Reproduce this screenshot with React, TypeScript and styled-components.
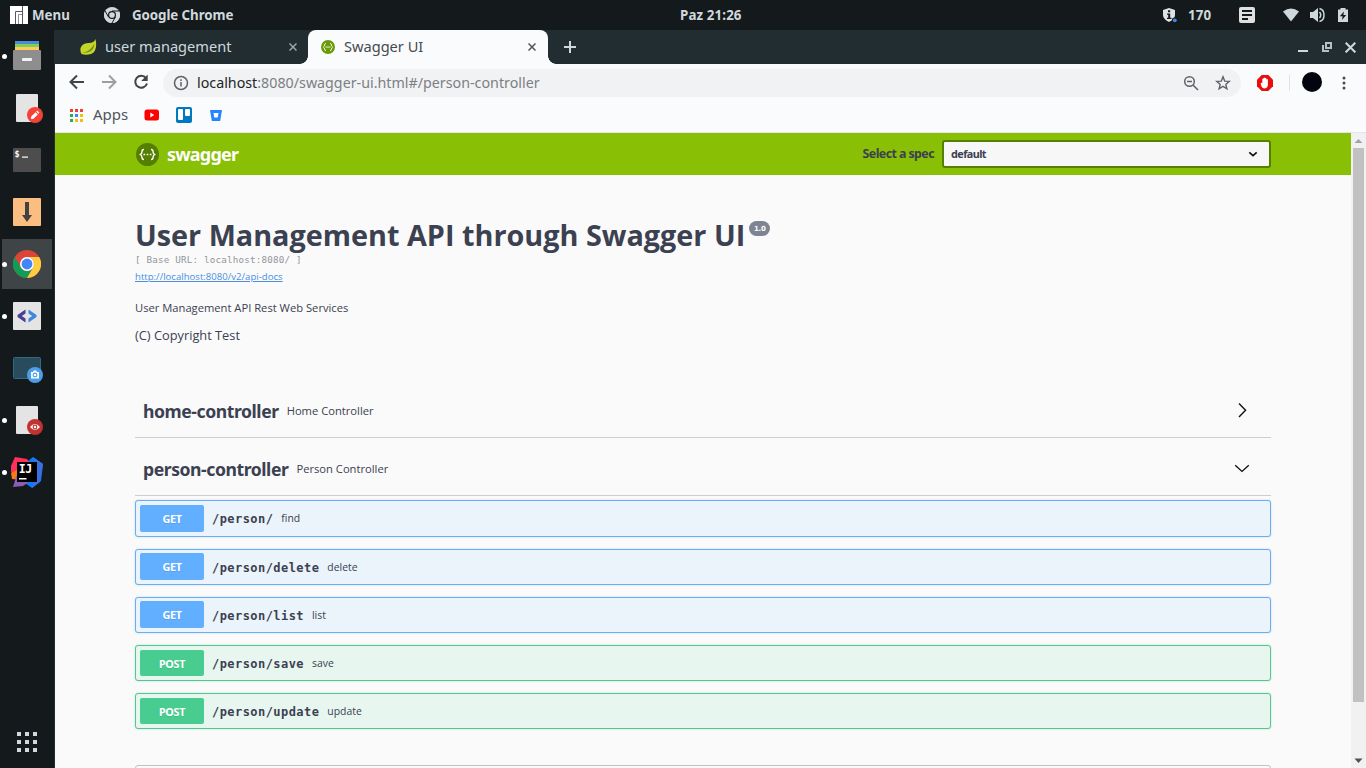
import React from "react";
import styled, { createGlobalStyle, css } from "styled-components";

const ui = '"Noto Sans", "Open Sans", sans-serif';
const body = '"Open Sans", sans-serif';
const heading = '"Noto Sans", "Open Sans", sans-serif';
const mono = '"DejaVu Sans Mono", monospace';

const GlobalStyle = createGlobalStyle`
  html, body { margin: 0; padding: 0; overflow: hidden; }
  * { box-sizing: border-box; }
  svg { display: block; flex: none; }
`;

const Desktop = styled.div`
  width: 1366px;
  height: 768px;
  display: flex;
  flex-direction: column;
  overflow: hidden;
  background: #14191c;
  white-space: nowrap;
`;

/* ---------- system panel ---------- */

const Panel = styled.header`
  height: 30px;
  flex: none;
  display: grid;
  grid-template-columns: 680px 1fr auto;
  align-items: center;
  color: #cfd8dc;
  font: 700 13.33px/30px ${ui};
`;

const PanelGroup = styled.div`
  display: flex;
  align-items: center;
`;

const PanelText = styled.span<{ $left?: number; $width?: number; $track?: number }>`
  margin-left: ${(p) => p.$left ?? 0}px;
  width: ${(p) => (p.$width ? `${p.$width}px` : "auto")};
  letter-spacing: ${(p) => p.$track ?? 0}px;
`;

const Slot = styled.span<{ $left?: number; $right?: number }>`
  display: flex;
  flex: none;
  margin-left: ${(p) => p.$left ?? 0}px;
  margin-right: ${(p) => p.$right ?? 0}px;
`;

/* ---------- dock ---------- */

const Main = styled.div`
  flex: 1;
  min-height: 0;
  display: flex;
`;

const Dock = styled.nav`
  width: 55px;
  flex: none;
  display: flex;
  flex-direction: column;
  border-right: 1px solid #252d31;
  background: #14191c;
`;

const DockItem = styled.div<{ $active?: boolean }>`
  position: relative;
  width: 50px;
  height: 50px;
  margin: 1px 2px;
  flex: none;
  display: flex;
  align-items: center;
  justify-content: center;
  background: ${(p) => (p.$active ? "#3f4447" : "transparent")};
`;

const RunningDot = styled.i`
  position: absolute;
  left: 0;
  top: 23px;
  width: 5px;
  height: 5px;
  border-radius: 50%;
  background: #fff;
`;

const AppGrid = styled.div`
  margin: auto 0 16px 17px;
  display: grid;
  grid-template-columns: repeat(3, 4px);
  grid-auto-rows: 4px;
  gap: 4px;
  i { background: #cfd8dc; }
`;

/* ---------- browser ---------- */

const Browser = styled.div`
  flex: 1;
  min-width: 0;
  display: flex;
  flex-direction: column;
  background: #fafbfd;
`;

const TabStrip = styled.div`
  height: 34px;
  flex: none;
  display: flex;
  align-items: center;
  padding-right: 10px;
  background: #222d32;
  color: #cfd8dc;
`;

const Tab = styled.div<{ $active?: boolean }>`
  position: relative;
  height: 34px;
  display: flex;
  align-items: center;
  font: 14.6px/32px ${ui};
  ${(p) =>
    p.$active
      ? css`
          width: 240px;
          padding: 0 12px;
          border-radius: 8px 8px 0 0;
          background: #fafbfd;
          color: #454b50;
          &::before, &::after {
            content: "";
            position: absolute;
            bottom: 0;
            width: 8px;
            height: 8px;
          }
          &::before { left: -8px; background: radial-gradient(circle at 0 0, transparent 7.5px, #fafbfd 8px); }
          &::after { right: -8px; background: radial-gradient(circle at 100% 0, transparent 7.5px, #fafbfd 8px); }
        `
      : css`
          width: 253px;
          padding: 0 11px 0 25px;
        `}
`;

const TabTitle = styled.span`
  flex: 1;
  margin: -2px 0 0 8px;
`;

const WindowButtons = styled.div`
  margin-left: auto;
  display: flex;
  align-items: center;
  gap: 12px;
`;

const Toolbar = styled.div`
  height: 37px;
  flex: none;
  display: flex;
  align-items: center;
  padding-left: 13px;
`;

const NavButtons = styled.div`
  display: flex;
  gap: 14px;
  margin: -1px 13px 0 0;
`;

const AddressBar = styled.div`
  width: 1078px;
  height: 28px;
  display: flex;
  align-items: center;
  padding: 0 10px;
  border-radius: 14px;
  background: #f1f2f4;
  color: #7b7f83;
  font: 14.28px/28px ${ui};
  b { font-weight: 400; color: #202428; }
`;

const Url = styled.span`
  flex: 1;
  height: 28px;
  margin-left: 8px;
`;

const Divider = styled.i`
  width: 1px;
  height: 16px;
  margin-left: 16px;
  background: #dfe2e6;
`;

const Avatar = styled.i`
  width: 20px;
  height: 20px;
  margin: -2px 0 0 12px;
  border-radius: 50%;
  background: #02040f;
`;

const Bookmarks = styled.div`
  height: 32px;
  flex: none;
  display: flex;
  align-items: center;
  padding: 0 0 3px 14px;
  border-bottom: 1px solid #e3e5f3;
  color: #50555a;
  font: 15px/28px ${ui};
`;

const FolderLabel = styled.span`
  height: 28px;
  line-height: 26px;
`;

/* ---------- page ---------- */

const Viewport = styled.div`
  flex: 1;
  min-height: 0;
  display: flex;
`;

const Page = styled.main`
  flex: 1;
  overflow: hidden;
  background: #fafafa;
  color: #3b4151;
`;

const Scrollbar = styled.div`
  width: 15px;
  flex: none;
  display: flex;
  flex-direction: column;
  align-items: center;
  background: #f1f1f1;
`;

const ScrollThumb = styled.i`
  width: 11px;
  height: 554px;
  margin-bottom: auto;
  background: #c1c1c1;
`;

const SpecBar = styled.div`
  height: 42px;
  display: flex;
  align-items: center;
  padding: 0 80px 0 81px;
  background: #89bf04;
`;

const Brand = styled.span`
  flex: 1;
  margin-left: 8px;
  color: #fff;
  font: 700 18px/42px ${heading};
  letter-spacing: -0.8px;
`;

const SpecLabel = styled.label`
  margin-right: 8px;
  font: 700 12.4px/42px ${heading};
  letter-spacing: -0.57px;
`;

const SpecSelect = styled.div`
  width: 329px;
  height: 28px;
  display: flex;
  align-items: center;
  justify-content: space-between;
  padding: 0 11px 0 7px;
  border: 2px solid #547f00;
  border-radius: 3px;
  background: #f7f7f7;
  font: 700 10.8px/24px ${heading};
  letter-spacing: -0.55px;
`;

const Content = styled.div`
  padding: 0 80px;
`;

const Info = styled.section`
  padding-top: 40px;
  height: 205px;
`;

const Title = styled.h2`
  display: flex;
  margin: 0;
  font: 700 28.8px/40px ${body};
`;

const Version = styled.small`
  width: 21px;
  height: 15px;
  margin: 6px 0 0 4px;
  border-radius: 12px;
  background: #7d8492;
  color: #fff;
  text-align: center;
  font: 700 7px/17px "DejaVu Sans", sans-serif;
  letter-spacing: -0.3px;
`;

const BaseUrl = styled.pre`
  margin: -3px 0 0;
  color: #92959d;
  font: 9.2px/16px ${mono};
  letter-spacing: 0.22px;
`;

const DocsLink = styled.a`
  display: block;
  margin-top: 1px;
  color: #4990e2;
  font: 9.6px/16px ${body};
  text-decoration: underline;
`;

const Description = styled.p`
  margin: 15px 0 0;
  font: 11.2px/16px ${body};
`;

const Terms = styled.p`
  margin: 9px 0 0;
  font: 12.8px/20px ${body};
`;

const TagHeader = styled.h4`
  height: 58px;
  margin: 0;
  padding: 4px 20px 0 8px;
  display: flex;
  align-items: center;
  border-bottom: 1px solid #cdced1;
`;

const TagName = styled.span`
  font: 700 17.6px/24px ${heading};
  letter-spacing: -0.44px;
`;

const TagNote = styled.small`
  flex: 1;
  margin-left: 8px;
  font: 11.2px/24px ${body};
`;

const Operations = styled.div`
  display: flex;
  flex-direction: column;
  gap: 12px;
  padding-top: 4px;
`;

const tones = {
  GET: { line: "#61affe", fill: "#ebf3fb" },
  POST: { line: "#49cc90", fill: "#e8f6f0" },
};

const Operation = styled.div<{ $method: keyof typeof tones; $tall?: boolean }>`
  height: ${(p) => (p.$tall ? 37 : 36)}px;
  display: flex;
  align-items: center;
  padding: 0 4px;
  border: 1px solid ${(p) => tones[p.$method].line};
  border-radius: 3px;
  background: ${(p) => tones[p.$method].fill};
  box-shadow: 0 0 2px rgba(0, 0, 0, 0.19);
`;

const Method = styled.span<{ $method: keyof typeof tones; $tall?: boolean }>`
  width: 64px;
  height: ${(p) => (p.$method === "GET" ? 27 : 26)}px;
  margin-top: ${(p) => (p.$method === "GET" && !p.$tall ? -1 : 0)}px;
  border-radius: 2px;
  background: ${(p) => tones[p.$method].line};
  color: #fff;
  font: 700 10.8px/27px ${heading};
  letter-spacing: -0.35px;
  text-align: center;
  text-shadow: 0 1px 0 rgba(0, 0, 0, 0.1);
`;

const Path = styled.span<{ $tall?: boolean }>`
  margin: ${(p) => (p.$tall ? 0 : 1)}px 0 0 8px;
  font: 700 12px/24px ${mono};
  letter-spacing: 0.44px;
`;

const Summary = styled.span`
  margin: -1px 0 0 8px;
  font: 10.4px/24px ${body};
`;

const Models = styled.section`
  height: 50px;
  margin-top: 36px;
  border: 1px solid #bfc0c4;
  border-radius: 3px;
`;

/* ---------- drawings ---------- */

const ChromeMark = ({ size, mono: flat }: { size: number; mono?: boolean }) => {
  const bg = flat ? "#14191c" : "#fff";
  const c = flat ? ["#cfd8dc", "#cfd8dc", "#cfd8dc"] : ["#db4437", "#0f9d58", "#ffcd40"];
  return (
    <svg width={size} height={size} viewBox="0 0 48 48">
      <circle cx="24" cy="24" r="24" fill={c[0]} />
      <path d="M3.2 12 A24 24 0 0 0 24 48 L34.4 30 A12 12 0 0 1 13.6 30z" fill={c[1]} />
      <path d="M24 48 A24 24 0 0 0 44.8 12 H24 A12 12 0 0 1 34.4 30z" fill={c[2]} />
      {flat && <path d="M24 12H45M34.4 30L24 48M13.6 30L3.2 12" stroke={bg} strokeWidth="3" fill="none" />}
      <circle cx="24" cy="24" r="12" fill={bg} />
      <circle cx="24" cy="24" r={flat ? 8.5 : 9.3} fill={flat ? c[0] : "#4285f4"} />
    </svg>
  );
};

const Close = ({ color, size = 8, weight = 1.5 }: { color: string; size?: number; weight?: number }) => (
  <svg width={size} height={size} viewBox="0 0 8 8">
    <path d="M.5.5l7 7M7.5.5l-7 7" stroke={color} strokeWidth={weight} />
  </svg>
);

const Chevron = ({ open }: { open?: boolean }) => (
  <svg width="18" height="18" viewBox="0 0 18 18" fill="none" stroke="#111" strokeWidth="1.4">
    {open ? <path d="M2.2 5.2L9 11.4l6.8-6.2" /> : <path d="M6 1.4l6.6 6.8L6 15" />}
  </svg>
);

const FilesIcon = () => (
  <svg width="32" height="32">
    <path fill="#4a8bd8" d="M4 1h24v3H4z" />
    <path fill="#7ed058" d="M4 4h24v3H4z" />
    <path fill="#ffcb5a" d="M4 7h24v3H4z" />
    <rect x="2" y="10" width="28" height="20" rx="1" fill="#8e8e8e" />
    <rect x="11" y="18" width="10" height="3" rx="1" fill="#f3f3f3" />
  </svg>
);

const EditorIcon = () => (
  <svg width="32" height="32">
    <rect x="5" y="2" width="22" height="28" rx="1" fill="#e4e4e4" />
    <circle cx="24" cy="23" r="8" fill="#f44336" />
    <path d="M20 27v-2.2l4.6-4.6 2.2 2.2-4.6 4.6zM25.2 19.6l1-1 2.2 2.2-1 1z" fill="#fff" />
  </svg>
);

const TerminalIcon = () => (
  <svg width="32" height="32">
    <rect x="2" y="4" width="28" height="24" rx="1" fill="#4d4d4d" />
    <text x="3.6" y="13" fill="#fff" fontFamily="DejaVu Sans Mono" fontWeight="700" fontSize="8.5">$</text>
    <path d="M11 12.5h6v1.2h-6z" fill="#fff" />
  </svg>
);

const DownloadIcon = () => (
  <svg width="32" height="32">
    <rect x="2" y="2" width="28" height="28" rx="1" fill="#fbbd80" />
    <path d="M14 6h4v13h3l-5 7-5-7h3z" fill="#424242" />
  </svg>
);

const CodeIcon = () => (
  <svg width="32" height="32">
    <rect x="2" y="2" width="28" height="28" rx="1" fill="#e4e4e4" />
    <path d="M14.500 9.500v4L10.800 16l3.700 2.500v4L6.500 17v-2z" fill="#4a3f93" />
    <path d="M17.500 9.500v4l3.700 2.500-3.700 2.500v4l8-5.500v-2z" fill="#3f87dc" />
  </svg>
);

const ScreenshotIcon = () => (
  <svg width="32" height="32">
    <rect x="2.5" y="5.5" width="27" height="21" rx="1" fill="#294b5e" stroke="#376782" />
    <circle cx="24" cy="23" r="8" fill="#4a9fe8" />
    <path d="M20 20h2l.8-1.4h2.4L26 20h2v6.5h-8z" fill="#fff" />
    <circle cx="24" cy="23" r="1.9" fill="none" stroke="#4a9fe8" strokeWidth="1.1" />
  </svg>
);

const ViewerIcon = () => (
  <svg width="32" height="32">
    <rect x="5" y="2" width="22" height="28" rx="1" fill="#e4e4e4" />
    <circle cx="24" cy="23" r="8" fill="#c23330" />
    <path d="M19 23q5-6 10 0q-5 6-10 0z" fill="#fff" />
    <circle cx="24" cy="23" r="1.8" fill="none" stroke="#c23330" strokeWidth="1.2" />
  </svg>
);

const IdeaIcon = () => (
  <svg width="32" height="32">
    <path d="M17 5l5-4 10 7-2 17-9 7-10-7z" fill="#087cfa" />
    <path d="M22 1l10 7-3 18-8 6 4-20z" fill="#3b6fe0" />
    <path d="M0 10l4-9 12 2 6 8-14 12-8-7z" fill="#fe315d" />
    <path d="M0 17l6-3 3 10-8-1z" fill="#f97a12" />
    <path d="M6 18l12 8-6 4-10 1z" fill="#8b5db5" />
    <path d="M6 6h20v20H6z" fill="#000" />
    <text x="7.8" y="16.8" fill="#fff" fontFamily="DejaVu Sans Mono" fontWeight="700" fontSize="11.5" letterSpacing="-.5">IJ</text>
    <path d="M8 22h7.500v1.500H8z" fill="#fff" />
  </svg>
);

const dock = [
  { icon: <FilesIcon />, running: true },
  { icon: <EditorIcon /> },
  { icon: <TerminalIcon /> },
  { icon: <DownloadIcon /> },
  { icon: <ChromeMark size={28} />, running: true, active: true },
  { icon: <CodeIcon />, running: true },
  { icon: <ScreenshotIcon /> },
  { icon: <ViewerIcon />, running: true },
  { icon: <IdeaIcon />, running: true },
];

const operations: { method: keyof typeof tones; path: string; note: string }[] = [
  { method: "GET", path: "/person/", note: "find" },
  { method: "GET", path: "/person/delete", note: "delete" },
  { method: "GET", path: "/person/list", note: "list" },
  { method: "POST", path: "/person/save", note: "save" },
  { method: "POST", path: "/person/update", note: "update" },
];

const appColors = ["#ea4335", "#ea4335", "#ea4335", "#34a853", "#4285f4", "#fbbc05", "#34a853", "#fbbc05", "#fbbc05"];

const SystemPanel = () => (
  <Panel>
    <PanelGroup>
      <Slot $left={10}>
        <svg width="18" height="18">
          <path fill="#fff" d="M0 0h18v18H0z" />
          <path d="M5.500 18V5.500H12.500M12.500 0v18" stroke="#53595c" fill="none" />
          <path d="M8.500 18V8.500H12" stroke="#8c9194" fill="none" />
        </svg>
      </Slot>
      <PanelText $left={4} $width={72}>Menu</PanelText>
      <ChromeMark size={16} mono />
      <PanelText $left={12} $track={-0.08}>Google Chrome</PanelText>
    </PanelGroup>
    <PanelText $track={0.12}>Paz 21:26</PanelText>
    <PanelGroup>
      <svg width="16" height="16">
        <path d="M8 1l6 2v5q0 4-6 7-6-3-6-7V3z" fill="#dfe1e2" />
        <path d="M7 3.300h2.200v2H7zM6 6.500h3.200v4.300H10.500V12H6v-1.200h1.200V7.700H6z" fill="#14191c" />
        <circle cx="13.600" cy="13.300" r="2.700" fill="#14191c" />
        <circle cx="13.800" cy="13.300" r="1.900" fill="#3f8ae0" />
      </svg>
      <PanelText $left={11} $width={51} $track={0.1}>170</PanelText>
      <svg width="16" height="16">
        <rect width="16" height="16" rx="2" fill="#e0e0e0" />
        <path d="M3 4h10M3 8h10M3 12h6" stroke="#14191c" strokeWidth="2" />
      </svg>
      <Slot $left={28}>
        <svg width="16" height="14">
          <path d="M0 3.500Q8-2.500 16 3.500L8 13.500z" fill="#cfd8dc" />
        </svg>
      </Slot>
      <Slot $left={11}>
        <svg width="15" height="16" fill="none" stroke="#cfd8dc" strokeWidth="1.500">
          <path d="M0 5h3l5-4v14l-5-4H0z" fill="#cfd8dc" stroke="none" />
          <path d="M9.500 5q2.500 3 0 6M9.500 1.500q4.500 1 4.500 6.500t-4.500 6.500" />
        </svg>
      </Slot>
      <Slot $left={13} $right={18}>
        <svg width="10" height="14">
          <path d="M2.500 0h5v1.500H10V14H0V1.500h2.500z" fill="#cfd8dc" />
          <path d="M6 3.500L1.800 8.300H4.600L4 12l4.200-5H5.400z" fill="#14191c" />
        </svg>
      </Slot>
    </PanelGroup>
  </Panel>
);

const Tabs = () => (
  <TabStrip>
    <Tab>
      <svg width="17" height="16" viewBox="0 0 17 16">
        <path d="M15.500 0q2.500 12-4.500 15-5 1.500-9.500 0Q-.5 11 1 8q2-4 8-4 5 0 6.500-4z" fill="#c3d529" />
        <path d="M2 14q8-1 12.500-9.500Q14 12 7 13.500q-3 .5-5 .5z" fill="#6f8f18" />
      </svg>
      <TabTitle>user management</TabTitle>
      <Close color="#9aa4a9" />
    </Tab>
    <Tab $active>
      <svg width="16" height="16">
        <circle cx="8" cy="8" r="7" fill="#6a9a0a" />
        <path d="M6 4.500q-1.500 0-1.500 1.500T3.300 8q1.200.5 1.200 2T6 11.500M10 4.500q1.500 0 1.500 1.500t1.200 2q-1.200.5-1.200 2T10 11.500M5.500 8h5" stroke="#e8f3cd" fill="none" />
      </svg>
      <TabTitle>Swagger UI</TabTitle>
      <Close color="#50555a" />
    </Tab>
    <Slot $left={16}>
      <svg width="12" height="12">
        <path d="M6 0v12M0 6h12" stroke="#cfd8dc" strokeWidth="2" />
      </svg>
    </Slot>
    <WindowButtons>
      <svg width="12" height="12">
        <path d="M1 9h10v2H1z" fill="#cfd8dc" />
      </svg>
      <svg width="12" height="12" fill="none" stroke="#b5bfc4" strokeWidth="2">
        <path d="M5 2h5v5H5zM2 4v6h6" />
      </svg>
      <Close color="#cfd8dc" size={11} weight={1.5} />
    </WindowButtons>
  </TabStrip>
);

const Navigation = () => (
  <Toolbar>
    <NavButtons>
      {["#3f4549", "#9a9fa3"].map((stroke, i) => (
        <svg key={stroke} width="18" height="18" fill="none" stroke={stroke} strokeWidth="2">
          {i === 0 ? <path d="M16 9H3M9 2.500L2.500 9 9 15.500" /> : <path d="M2 9h13M9 2.500L15.500 9 9 15.500" />}
        </svg>
      ))}
      <svg width="18" height="18" fill="none" stroke="#3f4549" strokeWidth="2">
        <path d="M14 5a6 6 0 1 0 1 5.500" />
        <path d="M15.700 1.500V8H9.200z" fill="#3f4549" stroke="none" />
      </svg>
    </NavButtons>
    <AddressBar>
      <svg width="16" height="16" fill="none" stroke="#5f6368" strokeWidth="1.500">
        <circle cx="8" cy="8" r="6.500" />
        <path d="M8 7v4.500M8 4.300v1.700" />
      </svg>
      <Url><b>localhost</b>:8080/swagger-ui.html#/person-controller</Url>
      <svg width="16" height="16" fill="none" stroke="#5f6368" strokeWidth="1.500">
        <circle cx="6.500" cy="6.500" r="4.800" />
        <path d="M10 10l5 5M4 6.500h5" />
      </svg>
      <Slot $left={16}>
        <svg width="16" height="16" fill="none" stroke="#5f6368" strokeWidth="1.400">
          <path d="M8 1.800l1.700 4.300 4.600.3-3.500 3 1.100 4.400L8 11.400l-3.900 2.400 1.100-4.400-3.500-3 4.600-.3z" />
        </svg>
      </Slot>
    </AddressBar>
    <Slot $left={16}>
      <svg width="16" height="16">
        <path d="M4.700 0h6.600L16 4.700v6.600L11.300 16H4.700L0 11.300V4.700z" fill="#e90d0d" />
        <path d="M3.600 8q1-.8 1.700.4V4q.6-1 1.200 0v3V3q.7-1 1.400 0v4V3.300q.7-1 1.400 0V7.500V4.500q.8-1 1.600 0V10q-.3 3-3.200 3.500-2.400 0-3.200-2z" fill="#fff" />
      </svg>
    </Slot>
    <Divider />
    <Avatar />
    <Slot $left={20}>
      <svg width="4" height="14" fill="#454b50">
        <circle cx="2" cy="2" r="1.500" />
        <circle cx="2" cy="7" r="1.500" />
        <circle cx="2" cy="12" r="1.500" />
      </svg>
    </Slot>
  </Toolbar>
);

const BookmarkBar = () => (
  <Bookmarks>
    <Slot $left={1} $right={10}>
      <svg width="13" height="13">
        {appColors.map((fill, i) => (
          <rect key={i} x={(i % 3) * 5} y={Math.floor(i / 3) * 5} width="3" height="3" fill={fill} />
        ))}
      </svg>
    </Slot>
    <FolderLabel>Apps</FolderLabel>
    <Slot $left={16}>
      <svg width="16" height="16">
        <rect x=".5" y="2.500" width="14.500" height="11" rx="2.500" fill="#f00" />
        <path d="M6.300 5.500v5l4-2.500z" fill="#fff" />
      </svg>
    </Slot>
    <Slot $left={16}>
      <svg width="16" height="16">
        <rect width="16" height="16" rx="2" fill="#0079bf" />
        <rect x="2" y="2" width="5" height="11" rx="1" fill="#fff" />
        <rect x="9" y="2" width="5" height="7" rx="1" fill="#fff" />
      </svg>
    </Slot>
    <Slot $left={16}>
      <svg width="16" height="16">
        <path d="M2 3h12l-1.800 11H3.800z" fill="#2684ff" />
        <path d="M5.500 6h5l-.8 4.500H6.300z" fill="#fff" />
      </svg>
    </Slot>
  </Bookmarks>
);

const App = () => (
  <Desktop>
    <GlobalStyle />
    <SystemPanel />
    <Main>
      <Dock>
        {dock.map((item, i) => (
          <DockItem key={i} $active={item.active}>
            {item.running && <RunningDot />}
            {item.icon}
          </DockItem>
        ))}
        <AppGrid>
          {appColors.map((_, i) => <i key={i} />)}
        </AppGrid>
      </Dock>
      <Browser>
        <Tabs />
        <Navigation />
        <BookmarkBar />
        <Viewport>
          <Page>
            <SpecBar>
              <svg width="23" height="23" viewBox="0 0 23 23">
                <circle cx="11.500" cy="11.500" r="11.500" fill="#547f00" />
                <path d="M8 6.500q-2 0-2 2t-1.700 3Q6 12.500 6 14.500t2 2M15 6.500q2 0 2 2t1.700 3Q17 12.500 17 14.500t-2 2" stroke="#fff" strokeWidth="1.400" fill="none" />
                <path d="M7.500 10.800h1.700v1.500H7.500zM10.700 10.800h1.600v1.500h-1.600zM13.800 10.800h1.700v1.500h-1.700z" fill="#fff" />
              </svg>
              <Brand>swagger</Brand>
              <SpecLabel>Select a spec</SpecLabel>
              <SpecSelect>
                default
                <svg width="10" height="8" fill="none" stroke="#111" strokeWidth="1.600">
                  <path d="M1.300 2.300L5 5.700l3.700-3.400" />
                </svg>
              </SpecSelect>
            </SpecBar>
            <Content>
              <Info>
                <Title>User Management API through Swagger UI<Version>1.0</Version></Title>
                <BaseUrl>[ Base URL: localhost:8080/ ]</BaseUrl>
                <DocsLink>http://localhost:8080/v2/api-docs</DocsLink>
                <Description>User Management API Rest Web Services</Description>
                <Terms>(C) Copyright Test</Terms>
              </Info>
              <TagHeader>
                <TagName>home-controller</TagName>
                <TagNote>Home Controller</TagNote>
                <Chevron />
              </TagHeader>
              <TagHeader>
                <TagName>person-controller</TagName>
                <TagNote>Person Controller</TagNote>
                <Chevron open />
              </TagHeader>
              <Operations>
                {operations.map((op, i) => (
                  <Operation key={op.path} $method={op.method} $tall={i === 0}>
                    <Method $method={op.method} $tall={i === 0}>{op.method}</Method>
                    <Path $tall={i === 0}>{op.path}</Path>
                    <Summary>{op.note}</Summary>
                  </Operation>
                ))}
              </Operations>
              <Models />
            </Content>
          </Page>
          <Scrollbar>
            <svg width="15" height="15">
              <path d="M3.500 10L7.500 6l4 4z" fill="#a3a3a3" />
            </svg>
            <ScrollThumb />
            <svg width="15" height="15">
              <path d="M3.500 5.500L7.500 10l4-4.500z" fill="#505050" />
            </svg>
          </Scrollbar>
        </Viewport>
      </Browser>
    </Main>
  </Desktop>
);

export default App;
